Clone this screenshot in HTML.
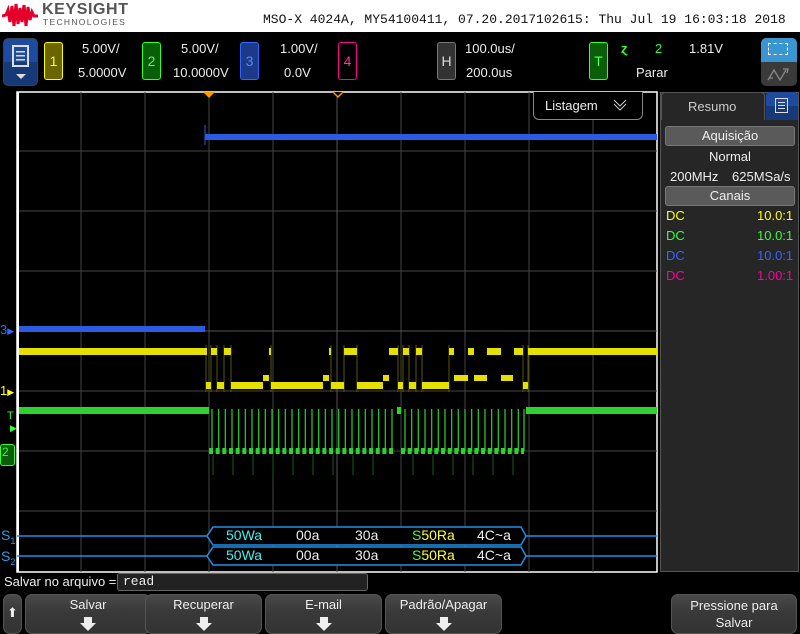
<!DOCTYPE html>
<html><head><meta charset="utf-8"><style>
*{margin:0;padding:0;box-sizing:border-box}
body{width:800px;height:632px;background:#000;position:relative;overflow:hidden;font-family:"Liberation Sans",sans-serif;color:#ddd}
.a{position:absolute}
.t{position:absolute;font-size:13px;white-space:nowrap}
.chb{position:absolute;width:19px;height:38px;border-radius:3px;border:1px solid;font-size:14px;text-align:center;line-height:36px}
.btn{position:absolute;top:594px;height:40px;border-radius:7px;background:linear-gradient(#4a4a4a,#3a3a3a 40%,#333);border:1px solid #555;text-align:center;font-size:13px;color:#eee;padding-top:2px}
.arr{display:block;margin:5px auto 0;width:0;height:0;border-left:8px solid transparent;border-right:8px solid transparent;border-top:8px solid #eee;position:relative}
.arr:before{content:"";position:absolute;left:-4px;top:-14px;width:8px;height:6px;background:#eee}
</style></head><body>
<div class="a" style="left:0;top:0;width:800px;height:32px;background:#fff"></div>
<svg class="a" style="left:2px;top:2px" width="36" height="26" viewBox="0 0 36 26"><path d="M0 14 L4 13 L6 8 L8 20 L10 4 L12 24 L14 2 L16 22 L18 6 L20 20 L22 3 L24 24 L26 5 L28 18 L30 10 L32 14 L36 14" stroke="#e4002b" stroke-width="3" fill="none"/></svg>
<div class="t" style="left:42px;top:1px;font-size:16px;font-weight:bold;color:#555;letter-spacing:0.6px">KEYSIGHT</div>
<div class="t" style="left:43px;top:17px;font-size:8.5px;color:#555;letter-spacing:1.3px">TECHNOLOGIES</div>
<div class="t" style="left:263px;top:12px;font-family:'Liberation Mono',monospace;font-size:13px;color:#111">MSO-X 4024A, MY54100411, 07.20.2017102615: Thu Jul 19 16:03:18 2018</div>

<div class="a" style="left:3px;top:38px;width:35px;height:48px;border-radius:5px;background:linear-gradient(#1e4aa0 50%,#163a78 50%);border:1px solid #345"></div>
<div class="a" style="left:12px;top:45px;width:17px;height:22px;border:2px solid #ddd;background:repeating-linear-gradient(#ddd 0 1.5px,transparent 1.5px 4px);background-clip:content-box;padding:2px"></div>
<div class="a" style="left:16px;top:74px;border-left:5px solid transparent;border-right:5px solid transparent;border-top:5px solid #ddd"></div>

<div class="chb" style="left:44px;top:42px;background:#6b6500;border-color:#ff0;color:#ff0">1</div>
<div class="t" style="left:82px;top:41px;color:#eee">5.00V/</div><div class="t" style="left:78px;top:65px;color:#eee">5.0000V</div>
<div class="chb" style="left:142px;top:42px;background:#0a5e0a;border-color:#3f3;color:#5f5">2</div>
<div class="t" style="left:181px;top:41px;color:#eee">5.00V/</div><div class="t" style="left:173px;top:65px;color:#eee">10.0000V</div>
<div class="chb" style="left:240px;top:42px;background:#1b3a88;border-color:#36f;color:#58f">3</div>
<div class="t" style="left:280px;top:41px;color:#eee">1.00V/</div><div class="t" style="left:284px;top:65px;color:#eee">0.0V</div>
<div class="chb" style="left:338px;top:42px;background:#000;border-color:#f09;color:#f39">4</div>
<div class="chb" style="left:437px;top:42px;background:#333;border-color:#777;color:#ddd">H</div>
<div class="t" style="left:465px;top:41px;color:#eee">100.0us/</div><div class="t" style="left:466px;top:65px;color:#eee">200.0us</div>
<div class="chb" style="left:589px;top:42px;background:#0a5e0a;border-color:#3f3;color:#5f5">T</div>
<div class="t" style="left:621px;top:41px;color:#3f3;font-weight:bold">ɀ</div>
<div class="t" style="left:655px;top:41px;color:#3f3">2</div>
<div class="t" style="left:689px;top:41px;color:#eee">1.81V</div>
<div class="t" style="left:636px;top:65px;color:#eee">Parar</div>
<div class="a" style="left:761px;top:38px;width:36px;height:24px;background:#3a96d0;border-radius:5px 5px 0 0"></div>
<div class="a" style="left:768px;top:43px;width:20px;height:12px;border:1px dashed #fff"></div>
<div class="a" style="left:761px;top:62px;width:36px;height:24px;background:#3a3a3a;border-radius:0 0 5px 5px"></div>
<svg class="a" style="left:766px;top:64px" width="26" height="20"><path d="M2 16 L8 6 L14 16 L20 6 M17 5 L22 5 L21 9 M3 14 L7 14" stroke="#888" fill="none" stroke-width="1.3"/></svg>

<svg class="a" style="left:0;top:90px" width="660" height="484">
<rect x="17" y="2" width="640" height="480" fill="none" stroke="#fff" stroke-width="1.5"/>
<g stroke="#444" stroke-width="1">
<path d="M81 2V482M145 2V482M209 2V482M273 2V482M401 2V482M465 2V482M529 2V482M593 2V482M17 61H657M17 121H657M17 181H657M17 241H657M17 301H657M17 361H657M17 421H657"/>
</g>
<path d="M337 2V482M17 241H657" stroke="#555"/>
</svg>
<div class="a" style="left:17px;top:92px;width:2px;height:480px;background:#fff"></div>
<div class="a" style="left:203px;top:92px;border-left:6px solid transparent;border-right:6px solid transparent;border-top:6px solid #f90"></div>
<div class="a" style="left:332px;top:92px;border-left:6px solid transparent;border-right:6px solid transparent;border-top:6px solid #f90"></div>
<div class="a" style="left:334px;top:92px;border-left:4px solid transparent;border-right:4px solid transparent;border-top:4px solid #000"></div>
<div class="a" style="left:533px;top:92px;width:110px;height:28px;border:1px solid #888;border-top:none;border-radius:0 0 6px 6px;background:#000"></div>
<div class="t" style="left:545px;top:98px;color:#eee">Listagem</div>
<svg class="a" style="left:613px;top:98px" width="14" height="14"><path d="M1 2L7 8L13 2M1 6L7 12L13 6" stroke="#ccc" fill="none"/></svg>

<svg class="a" style="left:0;top:0" width="660" height="572">
<rect x="19" y="326" width="186" height="6" fill="#2a5be0"/>
<rect x="205" y="134" width="452" height="6" fill="#2a5be0"/>
<path d="M205 125V145" stroke="#2a5be0"/>
<g stroke="#5a5600" stroke-width="1"><path d="M206 345V392M211 345V392M217 345V392M224 345V392M231 345V392M271 345V392M331 345V392M344 345V392M357 345V392M398 345V392M403 345V392M409 345V392M416 345V392M422 345V392M449 345V392M523 345V392M528 345V392"/></g>
<g fill="#e6e000">
<rect x="19" y="348" width="186" height="7"/>
<rect x="205" y="348" width="2" height="7"/><rect x="206" y="382" width="5" height="7"/>
<rect x="211" y="348" width="6" height="7"/><rect x="217" y="382" width="7" height="7"/>
<rect x="224" y="348" width="7" height="7"/><rect x="231" y="382" width="32" height="7"/>
<rect x="263" y="375" width="6" height="6"/><rect x="269" y="348" width="2" height="7"/>
<rect x="271" y="382" width="52" height="7"/><rect x="323" y="375" width="6" height="6"/>
<rect x="329" y="348" width="2" height="7"/><rect x="331" y="382" width="13" height="7"/>
<rect x="344" y="348" width="13" height="7"/><rect x="357" y="382" width="26" height="7"/>
<rect x="383" y="375" width="6" height="6"/><rect x="389" y="348" width="9" height="7"/>
<rect x="398" y="382" width="5" height="7"/><rect x="403" y="348" width="6" height="7"/>
<rect x="409" y="382" width="7" height="7"/><rect x="416" y="348" width="6" height="7"/>
<rect x="422" y="382" width="27" height="7"/><rect x="449" y="348" width="5" height="7"/>
<rect x="454" y="375" width="14" height="6"/><rect x="468" y="348" width="6" height="7"/>
<rect x="474" y="375" width="13" height="6"/><rect x="487" y="348" width="14" height="7"/>
<rect x="501" y="375" width="12" height="6"/><rect x="514" y="348" width="9" height="7"/>
<rect x="523" y="382" width="5" height="7"/><rect x="528" y="348" width="129" height="7"/>
</g>
<rect x="19" y="407" width="190" height="7" fill="#2fd12f"/>
<rect x="397" y="407" width="4" height="7" fill="#2fd12f"/>
<rect x="526" y="407" width="131" height="7" fill="#2fd12f"/>
<g stroke="#2fd12f" stroke-width="1.2" fill="none">
<path d="M212 451V409M218.7 451V409M225.3 451V409M232 451V409M238.7 451V409M245.3 451V409M252 451V409M258.7 451V409M265.3 451V409M272 451V409M278.7 451V409M285.3 451V409M292 451V409M298.7 451V409M305.3 451V409M312 451V409M318.7 451V409M325.3 451V409M332 451V409M338.7 451V409M345.3 451V409M352 451V409M358.7 451V409M365.3 451V409M372 451V409M378.7 451V409M385.3 451V409M392 451V409M405 451V409M411.7 451V409M418.3 451V409M425 451V409M431.7 451V409M438.3 451V409M445 451V409M451.7 451V409M458.3 451V409M465 451V409M471.7 451V409M478.3 451V409M485 451V409M491.7 451V409M498.3 451V409M505 451V409M511.7 451V409M518.3 451V409M524 451V409"/>
</g>
<path d="M209 451H394M401 451H524" stroke="#2fd12f" stroke-width="6" stroke-dasharray="4 2.67"/>
<g stroke="#1a5a1a"><path d="M213 455V475M233 455V475M253 455V475M273 455V475M293 455V475M313 455V475M333 455V475M353 455V475M373 455V475M413 455V475M433 455V475M453 455V475M473 455V475M493 455V475M513 455V475"/></g>
<path d="M17 536H657M17 556H657" stroke="#1e90e8" stroke-width="1.5"/>
<g stroke="#1e90e8" stroke-width="1.5" fill="#000">
<path d="M213 527H521L526 536L521 545H213L207 536Z"/>
<path d="M213 547H521L526 556L521 565H213L207 556Z"/>
</g>
</svg>
<div class="t" style="left:226px;top:527px;color:#4ee;font-size:14px">50Wa</div>
<div class="t" style="left:296px;top:527px;color:#eee;font-size:14px">00a</div>
<div class="t" style="left:355px;top:527px;color:#eee;font-size:14px">30a</div>
<div class="t" style="left:412px;top:527px;font-size:14px"><span style="color:#4f4">S</span><span style="color:#ff3">50Ra</span></div>
<div class="t" style="left:477px;top:527px;color:#eee;font-size:14px">4C~a</div>
<div class="t" style="left:226px;top:547px;color:#4ee;font-size:14px">50Wa</div>
<div class="t" style="left:296px;top:547px;color:#eee;font-size:14px">00a</div>
<div class="t" style="left:355px;top:547px;color:#eee;font-size:14px">30a</div>
<div class="t" style="left:412px;top:547px;font-size:14px"><span style="color:#4f4">S</span><span style="color:#ff3">50Ra</span></div>
<div class="t" style="left:477px;top:547px;color:#eee;font-size:14px">4C~a</div>
<div class="t" style="left:1px;top:527px;color:#2a9be8;font-size:14px">S<sub style="font-size:9px">1</sub></div>
<div class="t" style="left:1px;top:548px;color:#2a9be8;font-size:14px">S<sub style="font-size:9px">2</sub></div>

<div class="t" style="left:0;top:322px;color:#36f;font-size:13px">3<span style="font-size:9px">▶</span></div>
<div class="t" style="left:0;top:383px;color:#ff0;font-size:13px">1<span style="font-size:9px">▶</span></div>
<div class="t" style="left:7px;top:410px;color:#3f3;font-size:11px">T</div>
<div class="t" style="left:10px;top:423px;color:#3f3;font-size:9px">▶</div>
<div class="a" style="left:0;top:444px;width:15px;height:22px;border:1px solid #3f3;background:#0a5e0a;border-radius:3px;color:#3f3;font-size:12px;padding-left:1px">2</div>

<div class="a" style="left:660px;top:92px;width:139px;height:480px;background:#262626;border:1px solid #555"></div>
<div class="a" style="left:661px;top:92px;width:104px;height:28px;background:#262626;border:1px solid #555;border-bottom:none;border-radius:4px 4px 0 0"></div>
<div class="t" style="left:688px;top:99px;color:#ccc">Resumo</div>
<div class="a" style="left:766px;top:92px;width:32px;height:28px;background:linear-gradient(#1e4aa0 50%,#163a78 50%);border-radius:4px 4px 0 0"></div>
<div class="a" style="left:775px;top:98px;width:13px;height:15px;border:1.5px solid #ddd;background:repeating-linear-gradient(#ddd 0 1px,transparent 1px 3px);background-clip:content-box;padding:2px"></div>
<div class="a" style="left:665px;top:126px;width:130px;height:20px;background:#5a5a5a;border:1px solid #777;border-radius:3px;text-align:center;font-size:13px;color:#eee;line-height:18px">Aquisição</div>
<div class="t" style="left:709px;top:149px;color:#eee">Normal</div>
<div class="t" style="left:670px;top:169px;color:#eee">200MHz</div>
<div class="t" style="left:732px;top:169px;color:#eee">625MSa/s</div>
<div class="a" style="left:665px;top:186px;width:130px;height:20px;background:#5a5a5a;border:1px solid #777;border-radius:3px;text-align:center;font-size:13px;color:#eee;line-height:18px">Canais</div>
<div class="t" style="left:666px;top:208px;color:#ff0">DC</div><div class="t" style="left:757px;top:208px;color:#ff0">10.0:1</div>
<div class="t" style="left:666px;top:228px;color:#3f3">DC</div><div class="t" style="left:757px;top:228px;color:#3f3">10.0:1</div>
<div class="t" style="left:666px;top:248px;color:#36f">DC</div><div class="t" style="left:757px;top:248px;color:#36f">10.0:1</div>
<div class="t" style="left:666px;top:268px;color:#f09">DC</div><div class="t" style="left:757px;top:268px;color:#f09">1.00:1</div>

<div class="t" style="left:4px;top:574px;color:#eee">Salvar no arquivo =</div>
<div class="a" style="left:117px;top:573px;width:251px;height:18px;background:#222;border:1px solid #666;border-radius:3px;font-family:'Liberation Mono',monospace;font-size:13px;color:#eee;padding-left:5px;line-height:16px">read</div>
<div class="btn" style="left:3px;width:19px;padding-top:10px;font-size:13px">⬆</div>
<div class="btn" style="left:25px;width:126px">Salvar<span class="arr" style="margin-top:11px"></span></div>
<div class="btn" style="left:145px;width:117px">Recuperar<span class="arr" style="margin-top:11px"></span></div>
<div class="btn" style="left:265px;width:117px">E-mail<span class="arr" style="margin-top:11px"></span></div>
<div class="btn" style="left:385px;width:117px">Padrão/Apagar<span class="arr" style="margin-top:11px"></span></div>
<div class="btn" style="left:671px;width:126px;line-height:17px">Pressione para<br>Salvar</div>
</body></html>
